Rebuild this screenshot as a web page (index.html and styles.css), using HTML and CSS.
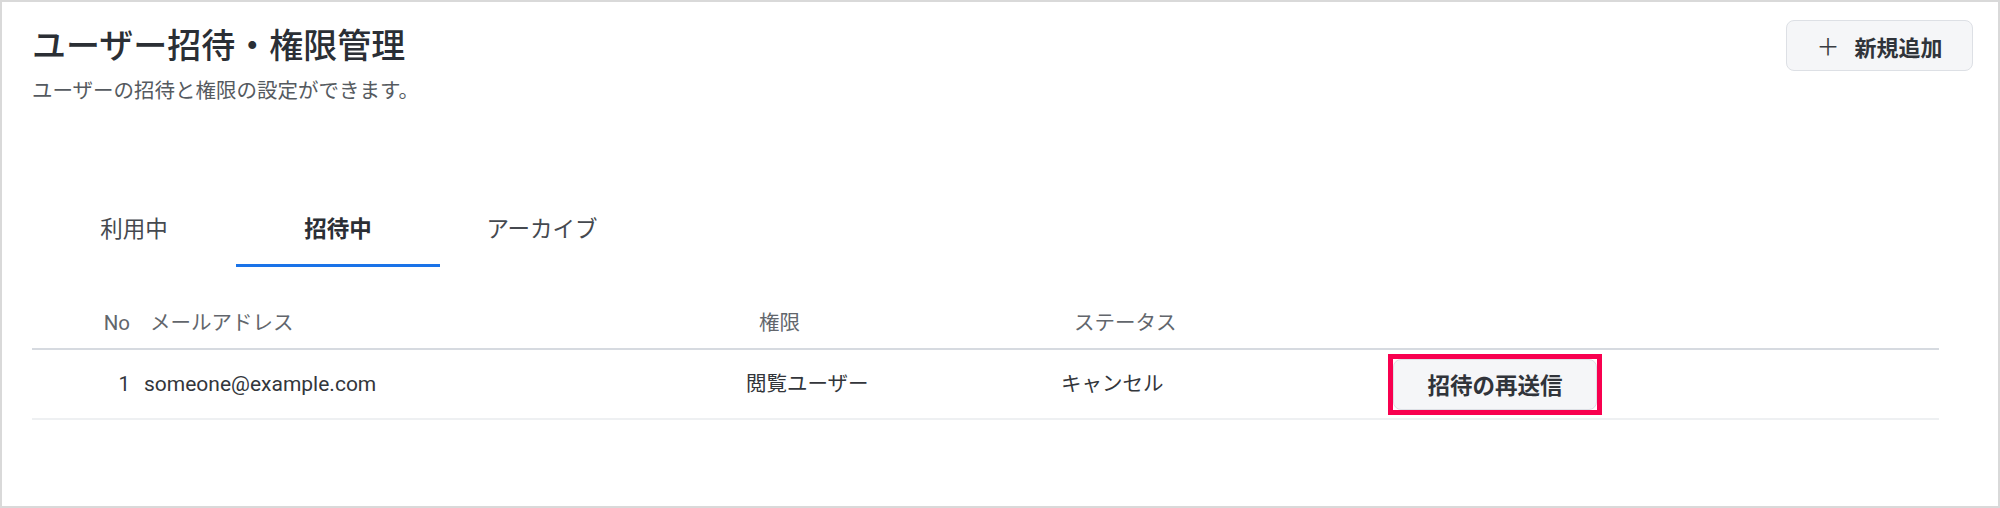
FILE: index.html
```html
<!DOCTYPE html>
<html lang="ja">
<head>
<meta charset="utf-8">
<title>ユーザー招待・権限管理</title>
<link rel="stylesheet" href="styles.css">
</head>
<body>
<div class="page">
  <header class="page-header">
    <div class="heading">
      <h1 class="title">ユーザー招待・権限管理</h1>
      <p class="subtitle">ユーザーの招待と権限の設定ができます。</p>
    </div>
    <button class="btn btn-add"><span class="plus">＋</span>新規追加</button>
  </header>

  <nav class="tabs">
    <div class="tab">利用中</div>
    <div class="tab tab-active">招待中</div>
    <div class="tab">アーカイブ</div>
  </nav>

  <div class="table">
    <div class="row row-head">
      <div class="cell cell-no">No</div>
      <div class="cell cell-mail">メールアドレス</div>
      <div class="cell cell-role">権限</div>
      <div class="cell cell-status">ステータス</div>
      <div class="cell cell-action"></div>
    </div>
    <div class="row row-body">
      <div class="cell cell-no">1</div>
      <div class="cell cell-mail">someone@example.com</div>
      <div class="cell cell-role">閲覧ユーザー</div>
      <div class="cell cell-status">キャンセル</div>
      <div class="cell cell-action">
        <span class="highlight"><button class="btn btn-resend">招待の再送信</button></span>
      </div>
    </div>
  </div>
</div>
</body>
</html>
```

FILE: styles.css
```css
* { box-sizing: border-box; }

html, body {
  margin: 0;
  padding: 0;
  background: #ffffff;
}

body {
  font-family: Roboto, "Noto Sans CJK JP", sans-serif;
  color: #333;
}

.page {
  width: 2000px;
  height: 508px;
  border: 2px solid #d9d9d9;
  padding: 0 25px 0 30px;
  overflow: hidden;
}

.page-header {
  display: flex;
  justify-content: space-between;
  align-items: flex-start;
  padding-top: 18px;
}

.heading {
  padding-top: 2px;
}

.title {
  margin: 0;
  font-family: "Noto Sans CJK JP", sans-serif;
  font-size: 34px;
  line-height: 44px;
  font-weight: 500;
  color: #2b2f35;
}

.subtitle {
  margin: 9px 0 0;
  font-family: "Noto Sans CJK JP", sans-serif;
  font-size: 20.5px;
  line-height: 28px;
  color: #555a60;
}

.btn {
  font-family: "Noto Sans CJK JP", sans-serif;
  background: #f5f6f8;
  border: 1px solid #dde0e5;
  border-radius: 8px;
  color: #30343a;
  font-weight: 700;
  cursor: pointer;
}

.btn-add {
  width: 187px;
  height: 51px;
  font-size: 22px;
  line-height: 1;
  display: flex;
  align-items: center;
  justify-content: center;
  padding: 0;
}

.plus {
  font-weight: 400;
  font-size: 23px;
  margin-right: 15px;
  color: #3a3d42;
}

.tabs {
  display: flex;
  margin-top: 87px;
}

.tab {
  width: 204px;
  text-align: center;
  font-family: "Noto Sans CJK JP", sans-serif;
  font-size: 22.5px;
  line-height: 30px;
  padding: 22px 0;
  border-bottom: 3px solid transparent;
  color: #45494f;
}

.tab-active {
  font-weight: 700;
  color: #2b2f35;
  border-bottom-color: #1a73e8;
}

.table {
  margin-top: 25px;
  margin-right: 34px;
}

.row {
  display: grid;
  grid-template-columns: 104px 604px 315px 321px 1fr;
  align-items: center;
}

.row-head {
  height: 58px;
  border-bottom: 2px solid #d6dae0;
  color: #62666c;
  padding-top: 6px;
}

.row-body {
  height: 70px;
  border-bottom: 2px solid #eef0f2;
  color: #33363b;
}

.cell {
  font-size: 20.5px;
  line-height: 28px;
  white-space: nowrap;
}

.cell-no {
  text-align: right;
  padding-right: 6px;
}

.cell-mail,
.cell-role,
.cell-status {
  padding-left: 6px;
}

.row-body .cell-mail {
  padding-left: 8px;
  font-size: 21px;
}

.row-head .cell-mail {
  padding-left: 14px;
}

.row-head .cell-role,
.row-head .cell-status {
  padding-left: 19px;
}

.cell-action {
  padding-left: 12px;
  display: flex;
}

.highlight {
  display: inline-flex;
  border: 5px solid #f8004f;
}

.btn-resend {
  width: 204px;
  height: 51px;
  font-size: 22.5px;
  line-height: 1;
  padding: 0;
}
```
